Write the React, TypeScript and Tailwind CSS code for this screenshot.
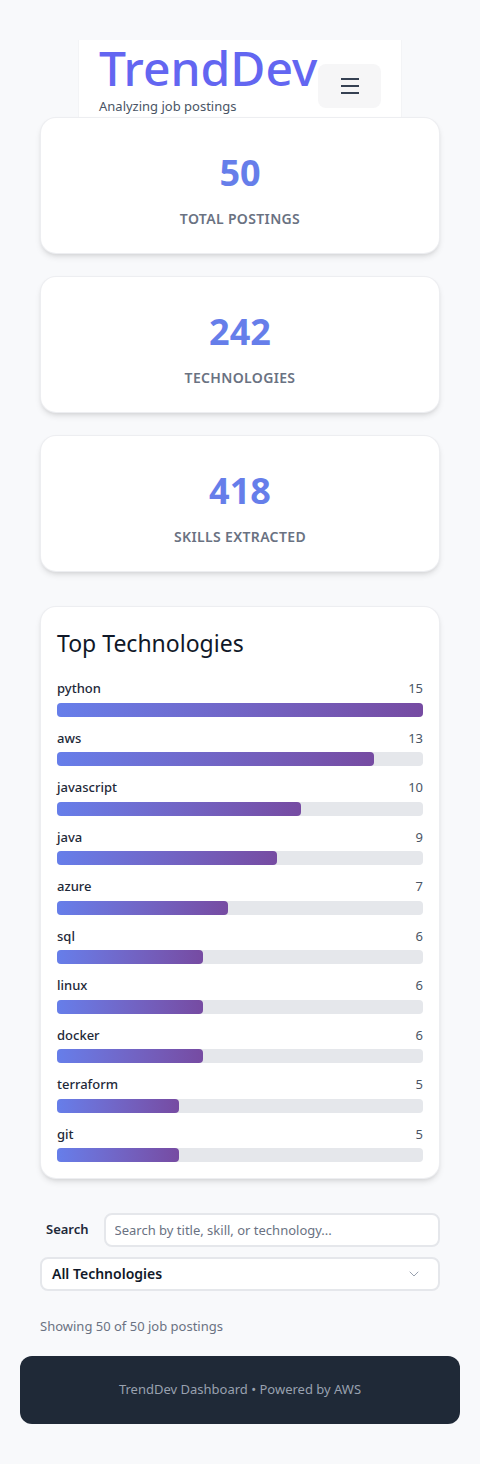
import { ChevronDown } from "lucide-react";

const stats = [
  { value: 50, label: "Total Postings" },
  { value: 242, label: "Technologies" },
  { value: 418, label: "Skills Extracted" },
];

const techs = [
  { name: "python", count: 15 },
  { name: "aws", count: 13 },
  { name: "javascript", count: 10 },
  { name: "java", count: 9 },
  { name: "azure", count: 7 },
  { name: "sql", count: 6 },
  { name: "linux", count: 6 },
  { name: "docker", count: 6 },
  { name: "terraform", count: 5 },
  { name: "git", count: 5 },
];

export default function App() {
  const max = Math.max(...techs.map((t) => t.count));

  return (
    <div
      className="min-h-screen bg-[#f8f9fb] px-5 pt-10 pb-10"
      style={{ fontFamily: '"Noto Sans", "Open Sans", sans-serif' }}
    >
      {/* Header */}
      <header className="mx-auto flex h-[77px] w-[324px] items-start justify-between border-x border-gray-100 bg-white px-5">
        <div>
          <h1 className="text-[48px] leading-[55px] font-medium text-[#6366f1]">TrendDev</h1>
          <p className="mt-[2px] text-[13px] leading-[18px] text-gray-600">Analyzing job postings</p>
        </div>
        <button className="mt-6 flex h-11 w-[63px] items-center justify-center rounded-lg bg-[#f6f6f7]">
          <svg width="18" height="16" viewBox="0 0 18 16" className="text-gray-700">
            <path d="M0 1h18M0 8h18M0 15h18" stroke="currentColor" strokeWidth="2" />
          </svg>
        </button>
      </header>

      <div className="px-5">
        {/* Stat cards */}
        <div className="flex flex-col gap-[22px]">
          {stats.map((s) => (
            <div
              key={s.label}
              className="flex h-[137px] flex-col items-center rounded-2xl border border-gray-200/70 bg-white pt-[35px] shadow-md"
            >
              <div className="text-[36px] leading-10 font-bold text-[#667eea]">{s.value}</div>
              <div className="mt-4 text-sm leading-5 font-semibold tracking-wide text-gray-500 uppercase">
                {s.label}
              </div>
            </div>
          ))}
        </div>

        {/* Top technologies */}
        <div className="mt-[34px] rounded-2xl border border-gray-200/70 bg-white px-4 pt-5 pb-4 shadow-md">
          <h2 className="text-[23px] leading-8 text-gray-900">Top Technologies</h2>
          <div className="mt-5 flex flex-col gap-3">
            {techs.map((t) => (
              <div key={t.name}>
                <div className="flex justify-between text-[13px] leading-[19.5px]">
                  <span className="font-medium text-gray-800">{t.name}</span>
                  <span className="text-gray-600">{t.count}</span>
                </div>
                <div className="mt-1 h-[14px] rounded bg-gray-200">
                  <div
                    className="h-full rounded bg-gradient-to-r from-[#667eea] to-[#764ba2]"
                    style={{ width: `${(t.count / max) * 100}%` }}
                  />
                </div>
              </div>
            ))}
          </div>
        </div>

        {/* Filters */}
        <div className="mt-[34px] flex items-center gap-[15px] pl-[6px]">
          <label className="text-[13px] font-semibold text-gray-800">Search</label>
          <input
            type="text"
            placeholder="Search by title, skill, or technology..."
            className="h-[34px] flex-1 rounded-lg border-2 border-gray-200 bg-white px-[9px] text-[13px] text-gray-800 placeholder:text-gray-500 focus:outline-none"
          />
        </div>
        <div className="mt-[10px] flex h-[34px] items-center justify-between rounded-lg border-2 border-gray-200 bg-white pr-4 pl-[10px]">
          <span className="text-sm font-semibold text-gray-900">All Technologies</span>
          <ChevronDown className="h-4 w-4 text-gray-400" strokeWidth={1.5} />
        </div>

        <p className="mt-[26px] text-[13px] leading-[18px] text-gray-500">Showing 50 of 50 job postings</p>
      </div>

      {/* Footer */}
      <footer className="mt-[21px] flex h-[68px] items-center justify-center rounded-xl bg-[#1f2937]">
        <span className="text-[13px] text-gray-400">TrendDev Dashboard • Powered by AWS</span>
      </footer>
    </div>
  );
}
